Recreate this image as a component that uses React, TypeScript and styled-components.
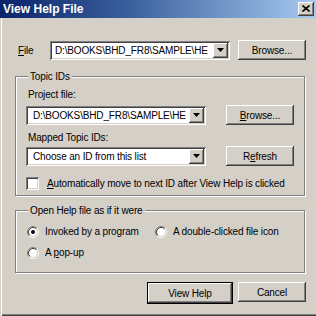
import styled, { createGlobalStyle } from "styled-components";

const FACE = "#D4D0C8";

const GlobalStyle = createGlobalStyle`
  html, body { margin: 0; padding: 0; }
  body {
    background: ${FACE};
    font-family: "Liberation Sans", Arial, sans-serif;
    font-size: 10px;
    letter-spacing: -0.15px;
    color: #000;
  }
  * { box-sizing: border-box; }
`;

const raised = `
  box-shadow: inset -1px -1px 0 #404040, inset 1px 1px 0 #ffffff,
    inset -2px -2px 0 #808080, inset 2px 2px 0 ${FACE};
`;

const sunken = `
  box-shadow: inset 1px 1px 0 #808080, inset -1px -1px 0 #ffffff,
    inset 2px 2px 0 #404040, inset -2px -2px 0 ${FACE};
`;

const Window = styled.div`
  width: 316px;
  height: 316px;
  background: ${FACE};
  display: flex;
  flex-direction: column;
  overflow: hidden;
  box-shadow: inset 1px 0 0 ${FACE}, inset 2px 0 0 #fff,
    inset 0 -1px 0 #404040, inset 0 -2px 0 #808080;
`;

const TitleBar = styled.div`
  height: 18px;
  flex: none;
  display: flex;
  align-items: center;
  justify-content: space-between;
  padding: 0 2px 0 3px;
  background: linear-gradient(to right, #0a246a, #3a5e9c 40%, #a6caf0);
`;

const Title = styled.span`
  font-weight: bold;
  font-size: 12px;
  letter-spacing: 0;
  color: #fff;
`;

const CloseButton = styled.div`
  width: 16px;
  height: 14px;
  background: ${FACE};
  ${raised}
  display: flex;
  align-items: center;
  justify-content: center;
  padding-bottom: 1px;
`;

const Body = styled.div`
  display: flex;
  flex-direction: column;
  padding: 22px 10px 0 15px;
`;

const FileRow = styled.div`
  display: flex;
  align-items: center;
  height: 20px;
`;

const FieldLabel = styled.span<{ $width: number }>`
  width: ${(p) => p.$width}px;
  padding-left: 3px;
  flex: none;
`;

const Combo = styled.div<{ $width: number }>`
  width: ${(p) => p.$width}px;
  height: 19px;
  flex: none;
  background: #fff;
  ${sunken}
  padding: 2px;
  display: flex;
  align-items: stretch;
  overflow: hidden;
`;

const ComboText = styled.span<{ $indent: number }>`
  flex: 1;
  min-width: 0;
  overflow: hidden;
  white-space: nowrap;
  line-height: 15px;
  padding-left: ${(p) => p.$indent}px;
`;

const DropButton = styled.span`
  width: 15px;
  flex: none;
  background: ${FACE};
  ${raised}
  display: flex;
  align-items: center;
  justify-content: center;
`;

const Button = styled.div<{ $width: number; $default?: boolean }>`
  width: ${(p) => p.$width}px;
  height: ${(p) => (p.$default ? 22 : 20)}px;
  flex: none;
  display: flex;
  align-items: center;
  justify-content: center;
  background: ${FACE};
  ${raised}
  ${(p) => (p.$default ? "border: 1px solid #000;" : "")}
`;

const Group = styled.fieldset<{ $gap: number }>`
  margin: ${(p) => p.$gap}px 0 0 0;
  padding: 0 10px;
  width: 290px;
  min-width: 0;
  border: 1px solid #808080;
  box-shadow: 1px 1px 0 #fff, inset 1px 1px 0 #fff;
`;

const Legend = styled.legend`
  margin-left: 2px;
  padding: 0 2px;
  line-height: 13px;
  background: ${FACE};
`;

const GroupBody = styled.div<{ $bottom: number }>`
  display: flex;
  flex-direction: column;
  padding-bottom: ${(p) => p.$bottom}px;
`;

const Caption = styled.div<{ $top: number }>`
  margin-top: ${(p) => p.$top}px;
  padding-left: 2px;
  line-height: 13px;
`;

const Row = styled.div<{ $top: number }>`
  margin-top: ${(p) => p.$top}px;
  height: 20px;
  display: flex;
  align-items: center;
  justify-content: space-between;
`;

const CheckRow = styled.div`
  margin-top: 11px;
  height: 13px;
  display: flex;
  align-items: center;
  gap: 8px;
  white-space: nowrap;
`;

const CheckBox = styled.span`
  width: 13px;
  height: 13px;
  flex: none;
  background: #fff;
  ${sunken}
`;

const RadioGrid = styled.div`
  display: grid;
  grid-template-columns: 128px auto;
  row-gap: 8px;
  margin-top: 8px;
  padding-left: 1px;
`;

const RadioOption = styled.div`
  height: 13px;
  display: flex;
  align-items: center;
  gap: 6px;
  white-space: nowrap;
`;

const Footer = styled.div`
  display: flex;
  justify-content: flex-end;
  align-items: flex-start;
  gap: 5px;
  margin-top: 9px;
`;

const Mn = styled.span`
  text-decoration: underline;
`;

const Arrow = () => (
  <svg width="7" height="4" viewBox="0 0 7 4">
    <polygon points="0,0 7,0 3.5,4" fill="#000" />
  </svg>
);

const Radio = ({ checked }: { checked?: boolean }) => (
  <svg width="12" height="12" viewBox="0 0 12 12" style={{ flex: "none" }}>
    <circle cx="6" cy="6" r="4.2" fill="#fff" />
    <path d="M2.11 9.89 A5.5 5.5 0 0 1 9.89 2.11" stroke="#808080" fill="none" />
    <path d="M9.89 2.11 A5.5 5.5 0 0 1 2.11 9.89" stroke="#fff" fill="none" />
    <path d="M2.82 9.18 A4.5 4.5 0 0 1 9.18 2.82" stroke="#404040" fill="none" />
    <path d="M9.18 2.82 A4.5 4.5 0 0 1 2.82 9.18" stroke={FACE} fill="none" />
    {checked && <circle cx="6" cy="6" r="2" fill="#000" />}
  </svg>
);

// only the part of the path that shows in the narrow combo field
const PATH = "D:\\BOOKS\\BHD_FR8\\SAMPLE\\HE";

export default function App() {
  return (
    <>
      <GlobalStyle />
      <Window>
        <TitleBar>
          <Title>View Help File</Title>
          <CloseButton>
            <svg width="8" height="7" viewBox="0 0 8 7">
              <path d="M0.5 0.5 L7.5 6.5 M7.5 0.5 L0.5 6.5" stroke="#000" strokeWidth="1.6" />
            </svg>
          </CloseButton>
        </TitleBar>
        <Body>
          <FileRow>
            <FieldLabel $width={35}>
              <Mn>F</Mn>ile
            </FieldLabel>
            <Combo $width={180}>
              <ComboText $indent={3}>{PATH}</ComboText>
              <DropButton>
                <Arrow />
              </DropButton>
            </Combo>
            <div style={{ flex: 1 }} />
            <Button $width={68}>Browse...</Button>
          </FileRow>

          <Group $gap={10}>
            <Legend>Topic IDs</Legend>
            <GroupBody $bottom={5}>
              <Caption $top={5}>Project file:</Caption>
              <Row $top={4}>
                <Combo $width={180}>
                  <ComboText $indent={5}>{PATH}</ComboText>
                  <DropButton>
                    <Arrow />
                  </DropButton>
                </Combo>
                <Button $width={68}>
                  <Mn>B</Mn>rowse...
                </Button>
              </Row>
              <Caption $top={6}>Mapped Topic IDs:</Caption>
              <Row $top={2}>
                <Combo $width={180}>
                  <ComboText $indent={5}>Choose an ID from this list</ComboText>
                  <DropButton>
                    <Arrow />
                  </DropButton>
                </Combo>
                <Button $width={68}>
                  R<Mn>e</Mn>fresh
                </Button>
              </Row>
              <CheckRow>
                <CheckBox />
                <span>
                  <Mn>A</Mn>utomatically move to next ID after View Help is clicked
                </span>
              </CheckRow>
            </GroupBody>
          </Group>

          <Group $gap={8}>
            <Legend>Open Help file as if it were</Legend>
            <GroupBody $bottom={13}>
              <RadioGrid>
                <RadioOption>
                  <Radio checked />
                  <span>Invoked by a program</span>
                </RadioOption>
                <RadioOption>
                  <Radio />
                  <span>A double-clicked file icon</span>
                </RadioOption>
                <RadioOption>
                  <Radio />
                  <span>
                    A <Mn>p</Mn>op-up
                  </span>
                </RadioOption>
              </RadioGrid>
            </GroupBody>
          </Group>

          <Footer>
            <Button $width={86} $default>
              View Help
            </Button>
            <Button $width={68}>Cancel</Button>
          </Footer>
        </Body>
      </Window>
    </>
  );
}
